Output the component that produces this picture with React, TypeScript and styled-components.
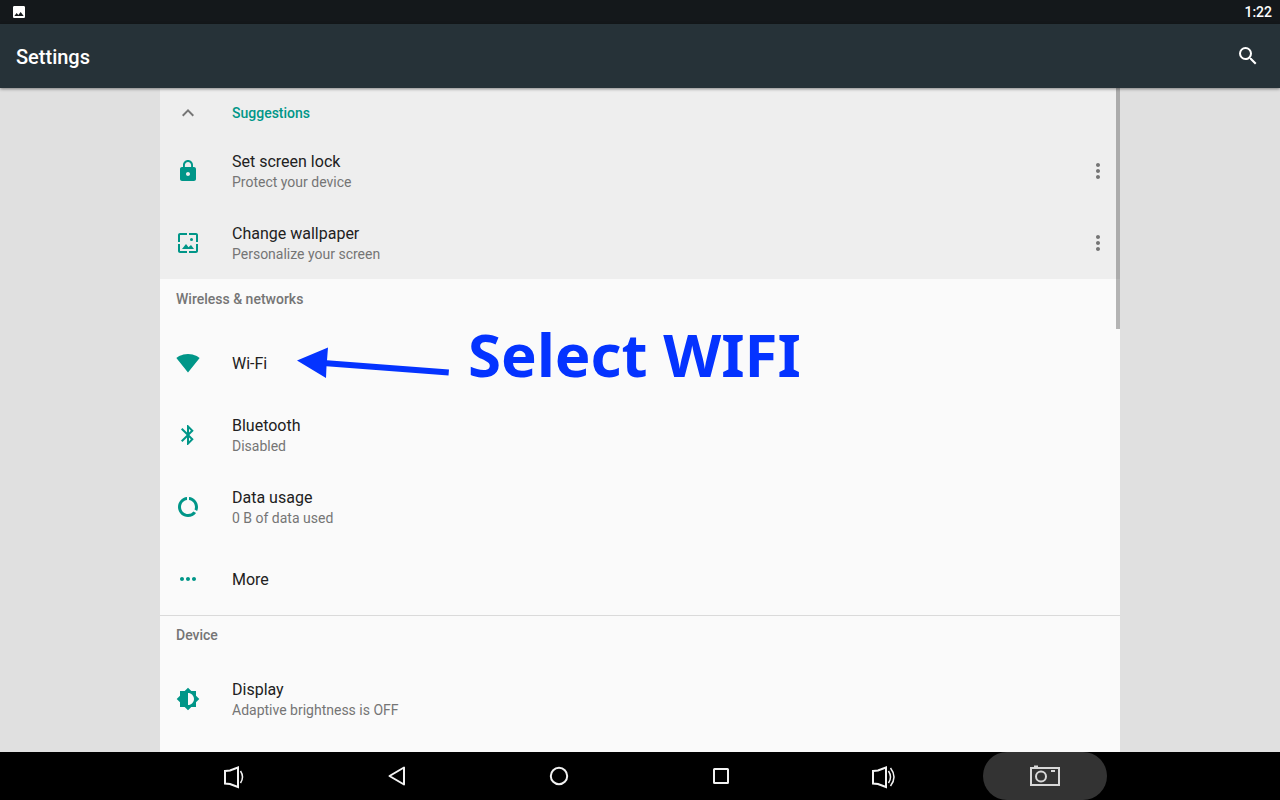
import React from "react";
import styled, { createGlobalStyle } from "styled-components";
import {
  MdBluetooth,
  MdBrightnessMedium,
  MdDataUsage,
  MdExpandLess,
  MdImage,
  MdLock,
  MdMoreHoriz,
  MdMoreVert,
  MdSearch,
  MdSignalWifi4Bar,
} from "react-icons/md";

const teal = "#009688";

const GlobalStyle = createGlobalStyle`
  * { box-sizing: border-box; }
  body { margin: 0; background: #e0e0e0; }
  body, button { font-family: Roboto, "Liberation Sans", sans-serif; }
  button { border: 0; padding: 0; background: none; color: inherit; cursor: pointer; }
  svg { display: block; flex: none; }
`;

const Screen = styled.div`
  display: flex;
  flex-direction: column;
  height: 100vh;
`;

const StatusBar = styled.div`
  display: flex;
  align-items: center;
  justify-content: space-between;
  flex: none;
  height: 24px;
  padding: 0 8px 0 11px;
  background: #14181b;
  color: #fff;
  font-size: 14px;
  font-weight: 500;
`;

const AppBar = styled.header`
  position: relative;
  z-index: 1;
  display: flex;
  align-items: center;
  justify-content: space-between;
  flex: none;
  height: 64px;
  padding: 0 20px 0 16px;
  background: #263238;
  color: #fff;
  box-shadow: 0 1px 3px rgba(0, 0, 0, 0.45);
`;

const Title = styled.h1`
  margin: 0;
  padding-top: 2px;
  font-size: 20px;
  line-height: 24px;
  font-weight: 500;
`;

const Content = styled.main`
  position: relative;
  flex: 1;
  min-height: 0;
  width: 100%;
  max-width: 960px;
  margin: 0 auto;
  overflow: hidden;
  background: #fafafa;
`;

const ScrollThumb = styled.div`
  position: absolute;
  top: 0;
  right: 0;
  width: 4px;
  height: 241px;
  background: rgba(0, 0, 0, 0.28);
`;

const Suggestions = styled.section`
  background: #eeeeee;
`;

const SuggestionsToggle = styled.button`
  display: flex;
  align-items: center;
  gap: 32px;
  width: 100%;
  height: 47px;
  padding: 3px 16px 0;
  color: #757575;
  text-align: left;
`;

const SuggestionsTitle = styled.span`
  color: ${teal};
  font-size: 14px;
  line-height: 20px;
  font-weight: 500;
`;

const Section = styled.section`
  & + & {
    box-shadow: inset 0 1px #dadada;
  }
`;

const SectionTitle = styled.h2`
  margin: 0;
  padding: 10px 16px;
  height: 48px;
  color: #757575;
  font-size: 14px;
  line-height: 20px;
  font-weight: 500;
`;

const Row = styled.div`
  position: relative;
  display: flex;
  align-items: center;
  height: 72px;
  padding: 0 10px 0 16px;
`;

const RowButton = styled.button`
  display: flex;
  align-items: center;
  gap: 32px;
  flex: 1;
  height: 100%;
  color: ${teal};
  text-align: left;
`;

const RowText = styled.span`
  display: flex;
  flex-direction: column;
  padding-top: 2px;
`;

const RowTitle = styled.span`
  color: #212121;
  font-size: 16px;
  line-height: 22px;
`;

const RowSummary = styled.span`
  padding-bottom: 2px;
  color: #757575;
  font-size: 14px;
  line-height: 18px;
`;

const IconButton = styled.button`
  color: #757575;
`;

const SearchButton = styled.button`
  color: #fff;
`;

const Callout = styled.div`
  position: absolute;
  top: 0;
  left: 136px;
  display: flex;
  align-items: center;
  gap: 18px;
  height: 72px;
  color: #0433ff;
  pointer-events: none;
`;

const CalloutText = styled.strong`
  align-self: flex-start;
  font-family: "Noto Sans", "DejaVu Sans", sans-serif;
  font-size: 60px;
  line-height: 54px;
  font-weight: 700;
  white-space: nowrap;
`;

const NavBar = styled.nav`
  flex: none;
  height: 48px;
  background: #000;
`;

const NavItems = styled.div`
  display: flex;
  max-width: 972px;
  height: 100%;
  margin: 0 auto;
`;

const NavSlot = styled.div`
  display: flex;
  justify-content: center;
  flex: 1;
`;

const NavButton = styled.button<{ $filled?: boolean }>`
  display: flex;
  align-items: center;
  justify-content: center;
  width: 124px;
  height: 48px;
  border-radius: 24px;
  background: ${(p) => (p.$filled ? "#333333" : "transparent")};
`;

const WallpaperIcon = () => (
  <svg width="24" height="24" viewBox="0 0 24 24" fill="currentColor">
    <path d="M4 4h7V2H4c-1.100 0-2 .9-2 2v7h2V4zM20 2h-7v2h7v7h2V4c0-1.100-.9-2-2-2zm0 18h-7v2h7c1.100 0 2-.9 2-2v-7h-2v7zM4 13H2v7c0 1.100.9 2 2 2h7v-2H4v-7z" />
    <circle cx="15.500" cy="8.500" r="1.500" />
    <path d="M6 18L10 13L12.500 16.300L15 14L18 18Z" />
  </svg>
);

const Arrow = () => (
  <svg width="154" height="44" viewBox="0 0 154 44" fill="currentColor">
    <path d="M1 19.500L32 6.500L31 19.200L153 28.500L152.500 34.500L30.500 25.200L30 37Z" />
  </svg>
);

const VolumeIcon = ({ waves }: { waves: number }) => (
  <svg width="26" height="26" viewBox="0 0 26 26" fill="none" stroke="#f2f2f2" strokeWidth="2">
    <path d="M3 8L8 7.500L16 4.500V24L8 21L3 20.500Z" />
    <path d="M18.500 8Q22.500 14 18.500 20" strokeWidth="1.500" />
    {waves > 1 && <path d="M20.500 5Q27.500 14 20.500 23" strokeWidth="1.500" />}
  </svg>
);

const BackIcon = () => (
  <svg width="20" height="22" viewBox="0 0 20 22" fill="none" stroke="#f2f2f2" strokeWidth="2" strokeLinejoin="round">
    <path d="M17 2.500V19.500L2.500 11Z" />
  </svg>
);

const HomeIcon = () => (
  <svg width="20" height="20" viewBox="0 0 20 20" fill="none" stroke="#f2f2f2" strokeWidth="2">
    <circle cx="10" cy="10" r="8.200" />
  </svg>
);

const RecentsIcon = () => (
  <svg width="18" height="18" viewBox="0 0 18 18" fill="none" stroke="#f2f2f2" strokeWidth="2">
    <rect x="2" y="2" width="14" height="14" rx="0.500" />
  </svg>
);

const CameraIcon = () => (
  <svg width="30" height="22" viewBox="0 0 30 22" fill="none" stroke="#d8d8d8" strokeWidth="2">
    <rect x="1" y="3" width="28" height="17" />
    <circle cx="11" cy="11.500" r="5" />
    <path d="M4 1.500H8M21 6H25" />
  </svg>
);

type Item = { icon: React.ReactNode; title: string; summary?: string };

const suggestions: Item[] = [
  { icon: <MdLock size={24} />, title: "Set screen lock", summary: "Protect your device" },
  { icon: <WallpaperIcon />, title: "Change wallpaper", summary: "Personalize your screen" },
];

const network: Item[] = [
  { icon: <MdBluetooth size={24} />, title: "Bluetooth", summary: "Disabled" },
  { icon: <MdDataUsage size={24} />, title: "Data usage", summary: "0 B of data used" },
  { icon: <MdMoreHoriz size={24} />, title: "More" },
];

const SettingsRow = ({ item, children }: { item: Item; children?: React.ReactNode }) => (
  <Row>
    <RowButton>
      {item.icon}
      <RowText>
        <RowTitle>{item.title}</RowTitle>
        {item.summary && <RowSummary>{item.summary}</RowSummary>}
      </RowText>
    </RowButton>
    {children}
  </Row>
);

const navigation = [
  { label: "Volume down", icon: <VolumeIcon waves={1} /> },
  { label: "Back", icon: <BackIcon /> },
  { label: "Home", icon: <HomeIcon /> },
  { label: "Recent apps", icon: <RecentsIcon /> },
  { label: "Volume up", icon: <VolumeIcon waves={2} /> },
  { label: "Screenshot", icon: <CameraIcon />, filled: true },
];

export default function App() {
  return (
    <Screen>
      <GlobalStyle />
      <StatusBar>
        <MdImage size={16} />
        <time>1:22</time>
      </StatusBar>
      <AppBar>
        <Title>Settings</Title>
        <SearchButton aria-label="Search">
          <MdSearch size={24} />
        </SearchButton>
      </AppBar>
      <Content>
        <Suggestions>
          <SuggestionsToggle aria-expanded="true">
            <MdExpandLess size={24} />
            <SuggestionsTitle>Suggestions</SuggestionsTitle>
          </SuggestionsToggle>
          {suggestions.map((item) => (
            <SettingsRow key={item.title} item={item}>
              <IconButton aria-label={`Options for ${item.title}`}>
                <MdMoreVert size={24} />
              </IconButton>
            </SettingsRow>
          ))}
        </Suggestions>
        <Section>
          <SectionTitle>Wireless &amp; networks</SectionTitle>
          <SettingsRow item={{ icon: <MdSignalWifi4Bar size={24} />, title: "Wi-Fi" }}>
            <Callout>
              <Arrow />
              <CalloutText>Select WIFI</CalloutText>
            </Callout>
          </SettingsRow>
          {network.map((item) => (
            <SettingsRow key={item.title} item={item} />
          ))}
        </Section>
        <Section>
          <SectionTitle>Device</SectionTitle>
          <SettingsRow
            item={{
              icon: <MdBrightnessMedium size={24} />,
              title: "Display",
              summary: "Adaptive brightness is OFF",
            }}
          />
        </Section>
        <ScrollThumb />
      </Content>
      <NavBar>
        <NavItems>
          {navigation.map(({ label, icon, filled }) => (
            <NavSlot key={label}>
              <NavButton aria-label={label} $filled={filled}>
                {icon}
              </NavButton>
            </NavSlot>
          ))}
        </NavItems>
      </NavBar>
    </Screen>
  );
}
